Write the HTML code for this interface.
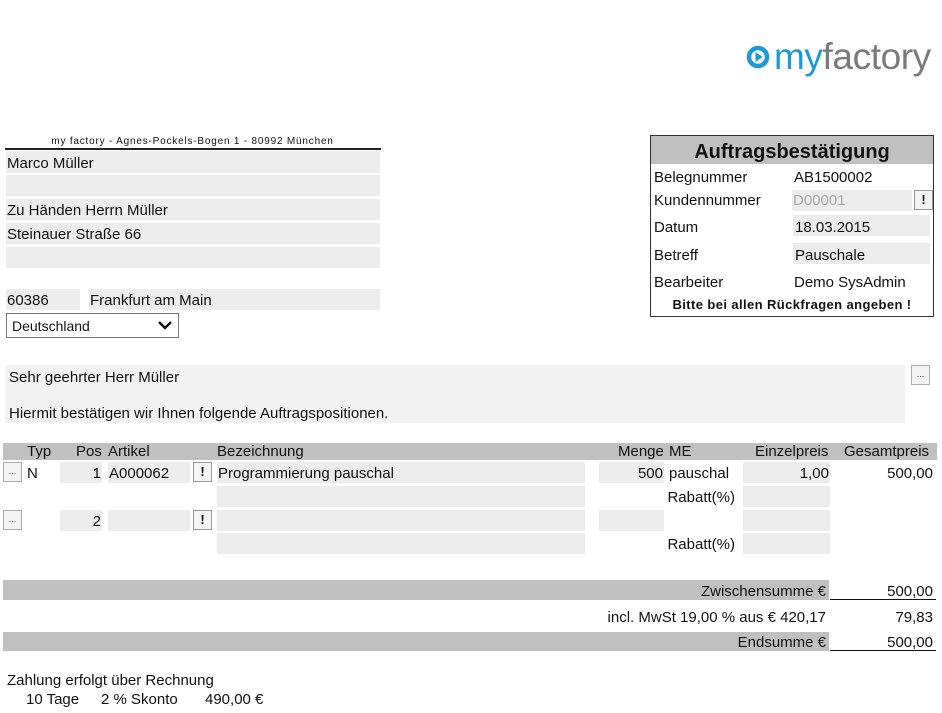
<!DOCTYPE html>
<html><head><meta charset="utf-8"><style>
*{margin:0;padding:0;box-sizing:border-box}
body{width:942px;height:713px;background:#fff;position:relative;overflow:hidden;font-family:"Liberation Sans",sans-serif;font-size:15px;color:#111}
div,span{position:absolute}
.f{background:#ececec}
.t{white-space:nowrap;line-height:16px;margin-top:1px}
.btn{background:#f4f4f4;border:1px solid #aaa;width:19px;height:20px;font-size:9px;text-align:center;line-height:16px;color:#444}
.ex{background:#f4f4f4;border:1px solid #999;width:19px;height:20px;font-weight:bold;text-align:center;line-height:18px;font-size:13px}
.r{text-align:right}
.bar{background:#c0c0c0}
</style></head><body>
<svg style="position:absolute;left:746px;top:45px" width="24" height="24" viewBox="0 0 24 24"><circle cx="12" cy="12" r="9" fill="none" stroke="#1a9ad6" stroke-width="4.5"/><path d="M9.5 7 L16.5 12 L9.5 17Z" fill="#1a9ad6"/></svg>
<div class="t" style="left:774px;top:36px;font-size:37px;line-height:42px;letter-spacing:-0.4px;margin-top:0"><span style="position:static;color:#1a9ad6">my</span><span style="position:static;color:#7a7a7a">factory</span></div>

<div class="t" style="left:5px;top:134px;width:375px;text-align:center;font-size:10px;line-height:14px;letter-spacing:0.8px">my factory - Agnes-Pockels-Bogen 1 - 80992 München</div>
<div style="left:5px;top:148px;width:376px;height:2px;background:#222"></div>
<div class="f" style="left:6px;top:151px;width:374px;height:22px"></div><div class="t" style="left:7px;top:155px">Marco Müller</div>
<div class="f" style="left:6px;top:175px;width:374px;height:21px"></div>
<div class="f" style="left:6px;top:199px;width:374px;height:21px"></div><div class="t" style="left:7px;top:202px">Zu Händen Herrn Müller</div>
<div class="f" style="left:6px;top:223px;width:374px;height:21px"></div><div class="t" style="left:7px;top:226px">Steinauer Straße 66</div>
<div class="f" style="left:6px;top:247px;width:374px;height:21px"></div>
<div class="f" style="left:6px;top:289px;width:74px;height:21px"></div><div class="t" style="left:7px;top:292px">60386</div>
<div class="f" style="left:89px;top:289px;width:291px;height:21px"></div><div class="t" style="left:90px;top:292px">Frankfurt am Main</div>
<div style="left:6px;top:313px;width:173px;height:25px;border:1px solid #777;background:#fff"></div>
<div class="t" style="left:12px;top:317px;font-size:14px">Deutschland</div>
<svg style="position:absolute;left:157px;top:319px" width="16" height="12"><path d="M2 3 L8 9 L14 3" fill="none" stroke="#111" stroke-width="2.4"/></svg>

<div style="left:650px;top:135px;width:284px;height:182px;border:1px solid #333"></div>
<div class="bar" style="left:651px;top:136px;width:282px;height:28px"></div>
<div class="t" style="left:651px;top:141px;width:282px;text-align:center;font-weight:bold;font-size:20px;line-height:20px">Auftragsbestätigung</div>
<div class="t" style="left:654px;top:169px">Belegnummer</div><div class="t" style="left:794px;top:169px">AB1500002</div>
<div class="t" style="left:654px;top:192px">Kundennummer</div>
<div class="f" style="left:792px;top:190px;width:120px;height:21px"></div><div class="t" style="left:793px;top:192px;color:#aaa">D00001</div>
<div class="ex" style="left:914px;top:190px">!</div>
<div class="t" style="left:654px;top:219px">Datum</div>
<div class="f" style="left:793px;top:215px;width:137px;height:21px"></div><div class="t" style="left:795px;top:219px">18.03.2015</div>
<div class="t" style="left:654px;top:247px">Betreff</div>
<div class="f" style="left:793px;top:243px;width:137px;height:21px"></div><div class="t" style="left:795px;top:247px">Pauschale</div>
<div class="t" style="left:654px;top:274px">Bearbeiter</div><div class="t" style="left:794px;top:274px">Demo SysAdmin</div>
<div class="t" style="left:651px;top:296px;width:282px;text-align:center;font-weight:bold;font-size:13px;letter-spacing:0.4px">Bitte bei allen Rückfragen angeben !</div>

<div style="left:5px;top:365px;width:900px;height:58px;background:#f2f2f2"></div>
<div class="t" style="left:9px;top:369px">Sehr geehrter Herr Müller</div>
<div class="t" style="left:9px;top:405px">Hiermit bestätigen wir Ihnen folgende Auftragspositionen.</div>
<div class="btn" style="left:911px;top:365px">...</div>

<div class="bar" style="left:3px;top:443px;width:934px;height:17px"></div>
<div class="t" style="left:27px;top:443px">Typ</div>
<div class="t" style="left:76px;top:443px">Pos</div>
<div class="t" style="left:108px;top:443px">Artikel</div>
<div class="t" style="left:217px;top:443px">Bezeichnung</div>
<div class="t" style="left:618px;top:443px">Menge</div>
<div class="t" style="left:669px;top:443px">ME</div>
<div class="t" style="left:755px;top:443px">Einzelpreis</div>
<div class="t" style="left:844px;top:443px">Gesamtpreis</div>

<div class="btn" style="left:3px;top:462px">...</div>
<div class="t" style="left:27px;top:465px">N</div>
<div class="f" style="left:60px;top:462px;width:42px;height:21px"></div><div class="t r" style="left:60px;top:465px;width:41px">1</div>
<div class="f" style="left:108px;top:462px;width:82px;height:21px"></div><div class="t" style="left:109px;top:465px">A000062</div>
<div class="ex" style="left:193px;top:462px">!</div>
<div class="f" style="left:217px;top:462px;width:368px;height:21px"></div><div class="t" style="left:218px;top:465px">Programmierung pauschal</div>
<div class="f" style="left:599px;top:462px;width:65px;height:21px"></div><div class="t r" style="left:599px;top:465px;width:64px">500</div>
<div class="t" style="left:669px;top:465px">pauschal</div>
<div class="f" style="left:743px;top:462px;width:87px;height:21px"></div><div class="t r" style="left:743px;top:465px;width:86px">1,00</div>
<div class="t r" style="left:840px;top:465px;width:93px">500,00</div>
<div class="f" style="left:217px;top:486px;width:368px;height:21px"></div>
<div class="t r" style="left:640px;top:489px;width:95px">Rabatt(%)</div>
<div class="f" style="left:743px;top:486px;width:87px;height:21px"></div>
<div class="btn" style="left:3px;top:510px">...</div>
<div class="f" style="left:60px;top:510px;width:42px;height:21px"></div><div class="t r" style="left:60px;top:513px;width:41px">2</div>
<div class="f" style="left:108px;top:510px;width:82px;height:21px"></div>
<div class="ex" style="left:193px;top:510px">!</div>
<div class="f" style="left:217px;top:510px;width:368px;height:21px"></div>
<div class="f" style="left:599px;top:510px;width:65px;height:21px"></div>
<div class="f" style="left:743px;top:510px;width:87px;height:21px"></div>
<div class="f" style="left:217px;top:533px;width:368px;height:21px"></div>
<div class="t r" style="left:640px;top:536px;width:95px">Rabatt(%)</div>
<div class="f" style="left:743px;top:533px;width:87px;height:21px"></div>

<div class="bar" style="left:3px;top:580px;width:826px;height:20px"></div>
<div class="t r" style="left:3px;top:583px;width:823px">Zwischensumme €</div>
<div class="t r" style="left:830px;top:583px;width:103px">500,00</div>
<div style="left:830px;top:599px;width:106px;height:1px;background:#111"></div>
<div class="t r" style="left:3px;top:609px;width:823px">incl. MwSt 19,00 % aus € 420,17</div>
<div class="t r" style="left:830px;top:609px;width:103px">79,83</div>
<div class="bar" style="left:3px;top:632px;width:826px;height:19px"></div>
<div class="t r" style="left:3px;top:634px;width:823px">Endsumme €</div>
<div class="t r" style="left:830px;top:634px;width:103px">500,00</div>
<div style="left:830px;top:650px;width:106px;height:1px;background:#111"></div>

<div class="t" style="left:7px;top:672px">Zahlung erfolgt über Rechnung</div>
<div class="t" style="left:26px;top:691px">10 Tage</div>
<div class="t" style="left:101px;top:691px">2 % Skonto</div>
<div class="t" style="left:205px;top:691px">490,00 €</div>
</body></html>
